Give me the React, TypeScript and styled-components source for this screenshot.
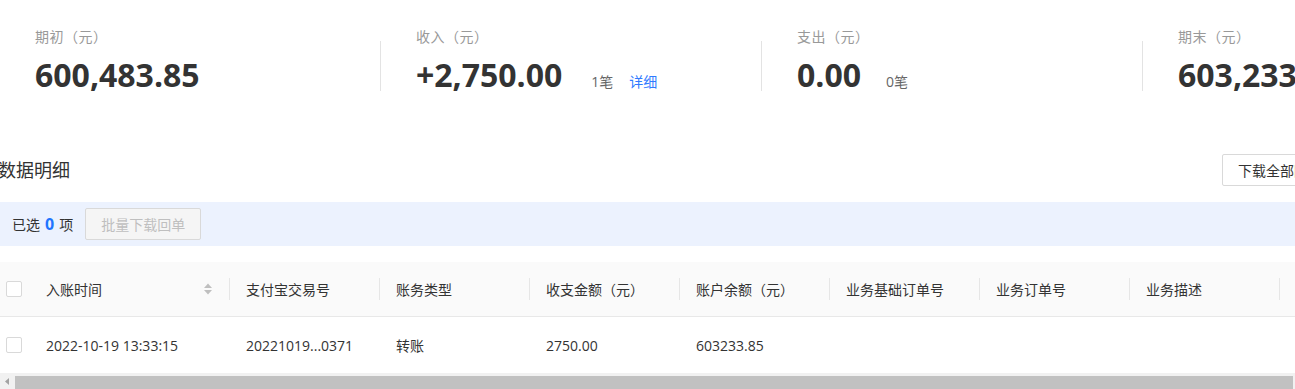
import React from 'react'
import styled, { createGlobalStyle } from 'styled-components'

const GlobalStyle = createGlobalStyle`
  html, body {
    margin: 0;
    padding: 0;
    background: #fff;
    overflow: hidden;
  }
  body {
    font-family: "Open Sans", "Noto Sans CJK SC", sans-serif;
    color: #333;
  }
`

const Page = styled.div`
  margin-left: -2px;
  width: 1340px;
`

const StatsRow = styled.div`
  display: flex;
  padding-top: 26px;
  padding-left: 1px;
`

const StatItem = styled.div`
  flex: 0 0 381px;
  display: flex;
  align-items: flex-start;
`

const Divider = styled.div<{ $hidden?: boolean }>`
  flex: 0 0 1px;
  height: 50px;
  margin-top: 15px;
  background: ${p => (p.$hidden ? 'transparent' : '#e3e3e3')};
`

const StatBody = styled.div`
  padding-left: 35px;
  white-space: nowrap;
`

const StatLabel = styled.div`
  font-size: 14px;
  line-height: 22px;
  letter-spacing: 0.5px;
  color: #999;
`

const ValueLine = styled.div`
  display: flex;
  align-items: baseline;
  margin-top: 7px;
`

const StatValue = styled.span`
  font-size: 32px;
  line-height: 40px;
  font-weight: 700;
  color: #333;
`

const Count = styled.span<{ $gap: number }>`
  margin-left: ${p => p.$gap}px;
  font-size: 14px;
  color: #666;
`

const DetailLink = styled.a`
  margin-left: 16px;
  font-size: 14px;
  color: #2f7bff;
  text-decoration: none;
  cursor: pointer;
`

const TitleRow = styled.div`
  display: flex;
  justify-content: space-between;
  align-items: center;
  margin-top: 59px;
  height: 32px;
`

const SectionTitle = styled.h2`
  margin: 0;
  font-size: 18px;
  line-height: 32px;
  font-weight: 400;
  color: #333;
`

const Button = styled.button<{ $disabled?: boolean }>`
  height: 32px;
  padding: 0 15px;
  border: 1px solid #d9d9d9;
  border-radius: 2px;
  background: ${p => (p.$disabled ? '#f5f5f5' : '#fff')};
  color: ${p => (p.$disabled ? '#bfbfbf' : '#333')};
  font-family: inherit;
  font-size: 14px;
  white-space: nowrap;
  cursor: ${p => (p.$disabled ? 'not-allowed' : 'pointer')};
`

const SelectBar = styled.div`
  display: flex;
  align-items: center;
  gap: 12px;
  height: 44px;
  margin-top: 16px;
  padding-left: 14px;
  background: #ecf2fe;
`

const SelectedText = styled.span`
  font-size: 14px;
  color: #333;
`

const SelectedNum = styled.b`
  margin: 0 5px;
  font-size: 16px;
  font-weight: 700;
  color: #1f74ff;
`

const Table = styled.div`
  margin-top: 16px;
  width: 1600px;
`

const Row = styled.div<{ $head?: boolean }>`
  display: flex;
  height: ${p => (p.$head ? '54px' : '56px')};
  background: ${p => (p.$head ? '#fafafa' : '#fff')};
  border-bottom: ${p => (p.$head ? '1px solid #e8e8e8' : 'none')};
`

const CheckCell = styled.div`
  flex: 0 0 32px;
  display: flex;
  align-items: center;
  padding-left: 8px;
  box-sizing: border-box;
`

const Checkbox = styled.span`
  width: 16px;
  height: 16px;
  box-sizing: border-box;
  border: 1px solid #d9d9d9;
  border-radius: 2px;
  background: #fff;
`

const Cell = styled.div<{ $w: number }>`
  flex: 0 0 ${p => p.$w}px;
  display: flex;
  align-items: center;
  padding-left: 16px;
  box-sizing: border-box;
  font-size: 14px;
  color: #333;
  white-space: nowrap;
`

const CellText = styled.span`
  flex: 1;
`

const Sep = styled.span`
  flex: 0 0 1px;
  height: 22px;
  background: #e6e6e6;
`

const SortWrap = styled.span`
  display: flex;
  margin-right: 17px;
`

const ScrollTrack = styled.div`
  display: flex;
  height: 17px;
  width: 1600px;
  background: #f1f1f1;
`

const ScrollArrow = styled.div`
  flex: 0 0 17px;
  display: flex;
  align-items: center;
  justify-content: center;
`

const ScrollThumb = styled.div`
  flex: 0 0 1278px;
  height: 14px;
  margin-top: 3px;
  background: #c1c1c1;
`

const stats = [
  { label: '期初（元）', value: '600,483.85' },
  { label: '收入（元）', value: '+2,750.00', count: '1笔', gap: 29, link: true },
  { label: '支出（元）', value: '0.00', count: '0笔', gap: 25 },
  { label: '期末（元）', value: '603,233.85' }
]

const columns = [
  { title: '入账时间', width: 200, sort: true },
  { title: '支付宝交易号', width: 150 },
  { title: '账务类型', width: 150 },
  { title: '收支金额（元）', width: 150 },
  { title: '账户余额（元）', width: 150 },
  { title: '业务基础订单号', width: 150 },
  { title: '业务订单号', width: 150 },
  { title: '业务描述', width: 150 },
  { title: '备注', width: 150 }
]

const rows = [
  ['2022-10-19 13:33:15', '20221019...0371', '转账', '2750.00', '603233.85', '', '', '', '']
]

const SortIcon = () => (
  <svg width='8' height='12' viewBox='0 0 8 12'>
    <polygon points='0,5 4,0.5 8,5' fill='#bfbfbf' />
    <polygon points='0,7 8,7 4,11.5' fill='#bfbfbf' />
  </svg>
)

export default function App() {
  return (
    <Page>
      <GlobalStyle />
      <StatsRow>
        {stats.map((s, i) => (
          <StatItem key={`stat-${i}`}>
            <Divider $hidden={i === 0} />
            <StatBody>
              <StatLabel>{s.label}</StatLabel>
              <ValueLine>
                <StatValue>{s.value}</StatValue>
                {s.count && <Count $gap={s.gap || 25}>{s.count}</Count>}
                {s.link && <DetailLink>详细</DetailLink>}
              </ValueLine>
            </StatBody>
          </StatItem>
        ))}
      </StatsRow>

      <TitleRow>
        <SectionTitle>数据明细</SectionTitle>
        <Button>下载全部回单</Button>
      </TitleRow>

      <SelectBar>
        <SelectedText>
          已选<SelectedNum>0</SelectedNum>项
        </SelectedText>
        <Button $disabled>批量下载回单</Button>
      </SelectBar>

      <Table>
        <Row $head>
          <CheckCell><Checkbox /></CheckCell>
          {columns.map((c, i) => (
            <Cell key={`head-${i}`} $w={c.width}>
              <CellText>{c.title}</CellText>
              {c.sort && <SortWrap><SortIcon /></SortWrap>}
              <Sep />
            </Cell>
          ))}
        </Row>
        {rows.map((r, i) => (
          <Row key={`row-${i}`}>
            <CheckCell><Checkbox /></CheckCell>
            {r.map((v, j) => (
              <Cell key={`cell-${i}-${j}`} $w={columns[j].width}>
                <CellText>{v}</CellText>
              </Cell>
            ))}
          </Row>
        ))}
        <ScrollTrack>
          <ScrollArrow>
            <svg width='4' height='7' viewBox='0 0 4 7'>
              <polygon points='4,0 0,3.5 4,7' fill='#a3a3a3' />
            </svg>
          </ScrollArrow>
          <ScrollThumb />
        </ScrollTrack>
      </Table>
    </Page>
  )
}
